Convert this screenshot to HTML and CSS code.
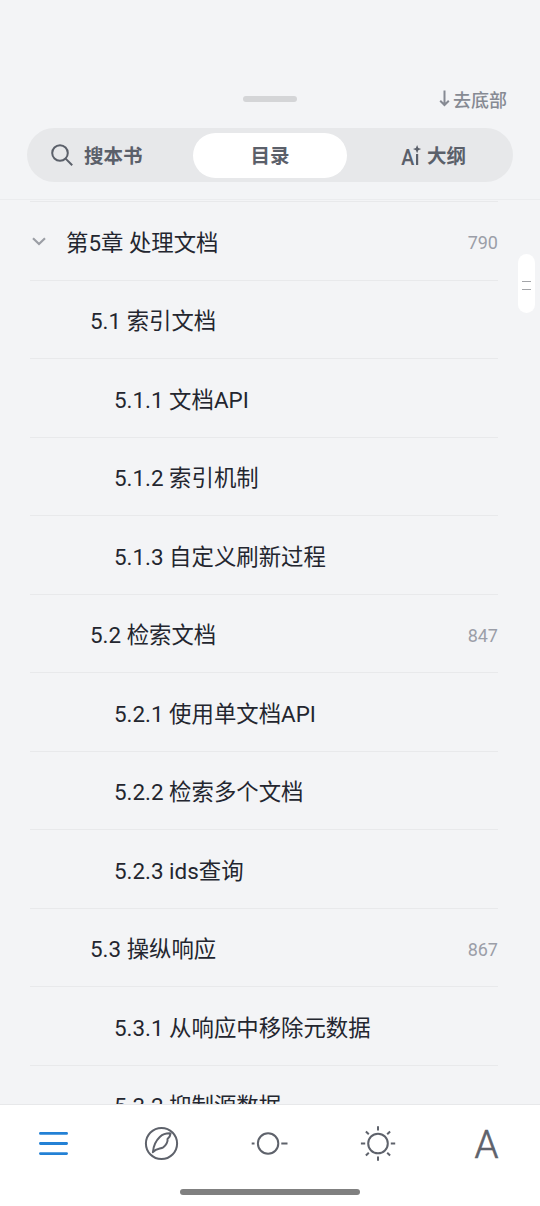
FILE: index.html
```html
<!DOCTYPE html>
<html lang="zh-CN">
  <head>
    <meta charset="UTF-8" />
    <meta name="viewport" content="width=device-width, initial-scale=1.0" />
    <title>目录</title>
    <link rel="stylesheet" href="styles.css">
  </head>
  <body>
    <div class="page">
      <header class="header">
        <div class="header-top">
          <div class="handle"></div>
          <div class="to-bottom">
            <svg width="11" height="17" viewBox="0 0 11 17" fill="none" stroke="currentColor" stroke-width="2">
              <path d="M5.5 0.5V14.5M1.2 10.7L5.5 15L9.8 10.7" />
            </svg>
            <span>去底部</span>
          </div>
        </div>
        <div class="tabs">
          <div class="tab tab-search">
            <svg width="22" height="22" viewBox="0 0 22 22" fill="none" stroke="currentColor" stroke-width="2">
              <circle cx="9" cy="9" r="7.8" />
              <path d="M14.6 14.6L21.2 21.2" />
            </svg>
            <span>搜本书</span>
          </div>
          <div class="tab active"><span>目录</span></div>
          <div class="tab tab-ai">
            <svg width="21" height="30" viewBox="0 0 21 30" fill="currentColor">
              <text class="ai-text" x="0.3" y="25" textLength="13" lengthAdjust="spacingAndGlyphs">A</text>
              <path d="M15 14H17.2V25H15Z" />
              <path d="M16.1 5L17.3 7.9L20.2 9.1L17.3 10.3L16.1 13.2L14.9 10.3L12 9.1L14.9 7.9Z" />
            </svg>
            <span>大纲</span>
          </div>
        </div>
      </header>

      <main class="toc">
        <div class="row">
          <svg class="arrow" width="14" height="9" viewBox="0 0 14 9" fill="none" stroke="currentColor" stroke-width="2.2">
            <path d="M1 1.2L7 7L13 1.2" />
          </svg>
          <span class="title">第5章 处理文档</span><span class="num">790</span>
        </div>
        <div class="row level2"><span class="title">5.1 索引文档</span></div>
        <div class="row level3"><span class="title">5.1.1 文档API</span></div>
        <div class="row level3"><span class="title">5.1.2 索引机制</span></div>
        <div class="row level3"><span class="title">5.1.3 自定义刷新过程</span></div>
        <div class="row level2"><span class="title">5.2 检索文档</span><span class="num">847</span></div>
        <div class="row level3"><span class="title">5.2.1 使用单文档API</span></div>
        <div class="row level3"><span class="title">5.2.2 检索多个文档</span></div>
        <div class="row level3"><span class="title">5.2.3 ids查询</span></div>
        <div class="row level2"><span class="title">5.3 操纵响应</span><span class="num">867</span></div>
        <div class="row level3"><span class="title">5.3.1 从响应中移除元数据</span></div>
        <div class="row level3"><span class="title">5.3.2 抑制源数据</span></div>
      </main>

      <div class="scroll-thumb"></div>

      <footer class="footer">
        <nav class="nav">
          <div class="nav-item nav-active">
            <svg width="36" height="36" viewBox="0 0 36 36" fill="none" stroke="currentColor" stroke-width="2.8" stroke-linecap="round">
              <path d="M4.4 7.4H30.6M4.4 17.5H30.6M4.4 27.6H30.6" />
            </svg>
          </div>
          <div class="nav-item">
            <svg width="36" height="36" viewBox="0 0 36 36" fill="none" stroke="currentColor" stroke-width="2">
              <circle cx="17.5" cy="17.5" r="15.6" />
              <path stroke-linejoin="round" d="M8.9 26.2C9.3 20.5 12.3 14.2 16 10.7C19 8 22.5 7.2 26.6 7.4C26.4 9.6 25.6 11.2 23.5 13C24.2 15.8 21.8 19.6 19.2 21.3C16.2 23 12.4 22 8.9 26.2Z" />
            </svg>
          </div>
          <div class="nav-item">
            <svg width="38" height="36" viewBox="0 0 38 36" fill="none" stroke="currentColor" stroke-width="2">
              <circle cx="17.1" cy="17.5" r="10.2" />
              <path d="M30.3 17.5H36.5M0.7 17.5H3.5" />
            </svg>
          </div>
          <div class="nav-item">
            <svg width="36" height="36" viewBox="0 0 36 36" fill="none" stroke="currentColor" stroke-width="2">
              <circle cx="18" cy="17.5" r="9.8" />
              <path d="M18 0.2V4.6M18 30.4V34.8M0.9 17.5H5.2M30.8 17.5H35.2M5.9 5.5L8.8 8.3M27.2 8.3L30.1 5.5M5.9 29.5L8.8 26.7M27.2 26.7L30.1 29.5" />
            </svg>
          </div>
          <div class="nav-item">
            <svg width="36" height="52" viewBox="0 0 36 52" fill="currentColor">
              <text class="font-text" x="6.4" y="40" textLength="24" lengthAdjust="spacingAndGlyphs">A</text>
            </svg>
          </div>
        </nav>
        <div class="home-bar"></div>
      </footer>
    </div>
  </body>
</html>
```

FILE: styles.css
```css
* {
  box-sizing: border-box;
}

body {
  margin: 0;
  background-color: #f3f4f6;
  font-family: Roboto, "Noto Sans CJK SC", sans-serif;
  color: #23262f;
}

svg {
  display: block;
  flex-shrink: 0;
}

.page {
  position: relative;
  display: flex;
  flex-direction: column;
  height: 1206px;
  overflow: hidden;
}

.header {
  flex-shrink: 0;
  height: 200px;
  padding: 83px 27px 0;
  border-bottom: 1px solid #ebecee;
}

.header-top {
  display: grid;
  grid-template-columns: 1fr 54px 1fr;
  align-items: center;
  height: 31px;
}

.handle {
  grid-column: 2;
  height: 6px;
  border-radius: 3px;
  background-color: #d4d5d7;
}

.to-bottom {
  display: flex;
  justify-content: flex-end;
  align-items: center;
  gap: 3px;
  padding-right: 6px;
  font-size: 18px;
  font-weight: 500;
  color: #868a93;
}

.tabs {
  display: grid;
  grid-template-columns: 166px 154px 166px;
  height: 54px;
  margin-top: 14px;
  padding: 5px 0 4px;
  border-radius: 27px;
  background-color: #e7e8ea;
}

.tab {
  display: flex;
  align-items: center;
  justify-content: center;
  padding-bottom: 1px;
  border-radius: 23px;
  font-size: 19.5px;
  font-weight: 700;
  line-height: 28px;
  color: #5b606a;
}

.tab span {
  padding-top: 4px;
}

.tab.active {
  background-color: #fff;
}

.tab-search {
  justify-content: flex-start;
  gap: 11px;
  padding-left: 24px;
}

.tab-ai {
  justify-content: flex-start;
  gap: 5px;
  padding-left: 54px;
}

.ai-text {
  font-size: 22px;
  font-weight: 500;
}

.toc {
  flex: 1;
  min-height: 0;
  padding: 1px 42px 0 30px;
  overflow: hidden;
}

.row {
  display: flex;
  align-items: center;
  height: 78.5px;
  padding-top: 4px;
  border-top: 1px solid #e8e9eb;
}

.arrow {
  margin: -2px 20px 0 2px;
  color: #9b9ea5;
}

.title {
  flex: 1;
  font-size: 22.4px;
  line-height: 32px;
  white-space: nowrap;
}

.level2 {
  padding-left: 60px;
}

.level3 {
  padding-left: 84px;
}

.num {
  font-size: 18px;
  color: #9b9ea8;
}

.scroll-thumb {
  position: absolute;
  top: 254px;
  right: 5px;
  display: flex;
  flex-direction: column;
  justify-content: center;
  align-items: center;
  gap: 6px;
  width: 17px;
  height: 59px;
  padding-top: 2px;
  border-radius: 9px;
  background-color: #fff;
}

.scroll-thumb::before,
.scroll-thumb::after {
  content: "";
  width: 9px;
  height: 1px;
  margin-top: 1px;
  background-color: #a3a5a9;
}

.footer {
  flex-shrink: 0;
  height: 102px;
  padding-top: 13px;
  border-top: 1px solid #e7e8ea;
  background-color: #fff;
}

.nav {
  display: grid;
  grid-template-columns: repeat(5, 1fr);
  height: 52px;
}

.nav-item {
  display: flex;
  align-items: center;
  justify-content: center;
  color: #5e626b;
}

.nav-active {
  color: #2481d5;
}

.font-text {
  font-size: 39px;
  font-weight: 300;
  stroke: currentColor;
  stroke-width: 0.6;
}

.home-bar {
  width: 180px;
  height: 6px;
  margin: 19px auto 0;
  border-radius: 3px;
  background-color: #808080;
}
```
